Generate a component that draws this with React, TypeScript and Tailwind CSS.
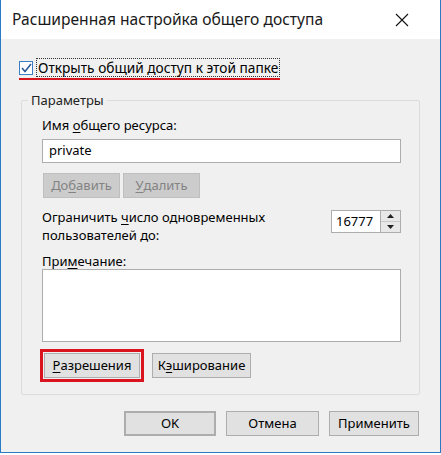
import type { ReactNode } from "react"

const font = { fontFamily: '"Noto Sans", "Open Sans", sans-serif' }

function U({ children }: { children: ReactNode }) {
  return <span className="underline underline-offset-2">{children}</span>
}

function Btn({
  children,
  className = "",
}: {
  children: ReactNode
  className?: string
}) {
  return (
    <div
      className={
        "flex h-[25px] items-center justify-center border border-[#adadad] bg-[#e1e1e1] text-[13px] text-black " +
        className
      }
    >
      {children}
    </div>
  )
}

export default function App() {
  return (
    <div className="h-[455px] w-[441px] bg-white" style={font}>
      <div className="flex h-[453px] w-[441px] flex-col border-x border-b border-[#2b7bc4] bg-[#f0f0f0]">
        {/* title bar */}
        <div className="flex h-[39px] shrink-0 items-center justify-between bg-white pl-[11px] pr-[31px]">
          <span className="text-[15.6px] text-[#1a1a1a]">Расширенная настройка общего доступа</span>
          <svg width="14" height="14" viewBox="0 0 14 14">
            <path d="M1 1 L13 13 M13 1 L1 13" stroke="#111" strokeWidth="1.1" />
          </svg>
        </div>

        {/* share checkbox */}
        <div className="ml-[18px] mt-[19px] flex w-fit flex-col">
          <div className="flex items-center">
            <div className="flex h-[14px] w-[14px] items-center justify-center border border-[#3c7fc4] bg-white">
              <svg width="11" height="10" viewBox="0 0 11 10">
                <path d="M1 5 L4 8.5 L10 1" fill="none" stroke="#2a5a9a" strokeWidth="1.6" />
              </svg>
            </div>
            <span className="ml-[3px] border border-dotted border-[#333] px-px text-[13.7px] leading-[17px] text-black">
              Открыть общий доступ к этой папке
            </span>
          </div>
          <div className="mt-[1px] h-[2px] w-full bg-[#d6141e]" />
        </div>

        {/* parameters group */}
        <fieldset className="mx-[20px] mt-[11px] rounded-[2px] border border-[#dcdcdc] pb-[16px] pl-[20px] pr-[18px]">
          <legend className="-ml-[14px] px-[3px] text-[13px] leading-[18px] text-[#222]">Параметры</legend>

          <div className="mt-[7px] text-[13px] leading-[18px] text-black">
            Имя <U>о</U>бщего ресурса:
          </div>
          <div className="mt-[5px] flex h-[24px] items-center border border-[#adadad] bg-white px-[6px] text-[13px] text-black">
            private
          </div>

          <div className="mt-[10px] flex gap-[3px] pl-px">
            <div className="flex h-[25px] w-[77px] items-center justify-center border border-[#bfbfbf] bg-[#cccccc] text-[13px] text-[#838383]">
              До<U>б</U>авить
            </div>
            <div className="flex h-[25px] w-[77px] items-center justify-center border border-[#bfbfbf] bg-[#cccccc] text-[13px] text-[#838383]">
              <U>У</U>далить
            </div>
          </div>

          <div className="mt-[10px] flex items-start justify-between">
            <div className="text-[13px] leading-[18px] text-black">
              Ограничить <U>ч</U>исло одновременных
              <br />
              пользователей до:
            </div>
            <div className="mt-[2px] flex h-[23px]">
              <div className="flex w-[50px] items-center overflow-hidden border border-[#adadad] bg-white pl-[4px] text-[13px] text-black">
                16777
              </div>
              <div className="flex w-[20px] flex-col border border-l-0 border-[#adadad] bg-[#e8e8e8]">
                <div className="flex flex-1 items-center justify-center border-b border-[#c8c8c8]">
                  <svg width="7" height="4" viewBox="0 0 7 4">
                    <path d="M0 4 L3.5 0 L7 4 Z" fill="#222" />
                  </svg>
                </div>
                <div className="flex flex-1 items-center justify-center">
                  <svg width="7" height="4" viewBox="0 0 7 4">
                    <path d="M0 0 L3.5 4 L7 0 Z" fill="#222" />
                  </svg>
                </div>
              </div>
            </div>
          </div>

          <div className="mt-[9px] text-[13px] leading-[16px] text-black">
            При<U>м</U>ечание:
          </div>
          <div className="h-[73px] border border-[#adadad] bg-white" />

          <div className="mt-[11px] flex gap-[12px] pl-[2px]">
            <Btn className="w-[96px] outline-3 outline-offset-1 outline-[#d9141e]">
              <U>Р</U>азрешения
            </Btn>
            <Btn className="w-[99px]">
              К<U>э</U>ширование
            </Btn>
          </div>
        </fieldset>

        {/* dialog buttons */}
        <div className="mt-[16px] flex justify-end gap-[10px] pr-[21px]">
          <Btn className="w-[92px] border-2 border-[#0a74d6]">OK</Btn>
          <Btn className="w-[93px]">Отмена</Btn>
          <Btn className="w-[90px]">Применить</Btn>
        </div>
      </div>
    </div>
  )
}
